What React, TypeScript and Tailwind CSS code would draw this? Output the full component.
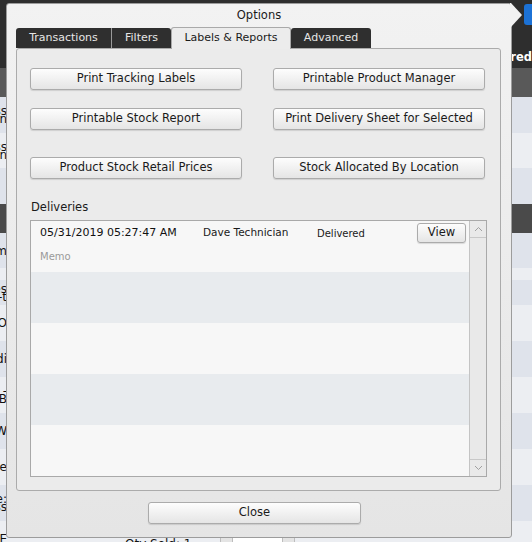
import React from "react";

function Frag({ lines }: { lines: string[] }) {
  return (
    <div className="w-[7px] overflow-hidden flex flex-col items-end justify-center text-[12px] leading-[8px] text-[#111] h-full">
      {lines.map((l, i) => (
        <span key={i} className="whitespace-nowrap">
          {l}
        </span>
      ))}
    </div>
  );
}

function Background() {
  return (
    <div className="flex flex-col">
      <div className="relative h-[68px] bg-[#2e2e2e] flex items-end justify-end pb-[5px]">
        <span className="text-white font-bold text-[11.5px] whitespace-nowrap leading-none">Delivered</span>
        <div className="absolute left-[524px] top-[4px] w-[14px] h-[21px] rounded-[3px] bg-[#1c72d6]" />
      </div>
      <div className="h-[29px] bg-[#595959]" />
      <div className="h-[36px] bg-[#dfe3eb]"><Frag lines={["Wireless", "Ran"]} /></div>
      <div className="h-[35px] bg-[#eceef2]"><Frag lines={["Wireless", "Ran"]} /></div>
      <div className="h-[36px] bg-[#dfe3eb]" />
      <div className="h-[29px] bg-[#4a4a4a]" />
      <div className="h-[35px] bg-[#dfe3eb]"><Frag lines={["Item"]} /></div>
      <div className="h-[12px] bg-[#eceef2]" />
      <div className="h-[25px] bg-[#dfe3eb]"><Frag lines={["Cables", "Set-t"]} /></div>
      <div className="h-[36px] bg-[#eceef2]"><Frag lines={["IPO"]} /></div>
      <div className="h-[36px] bg-[#dfe3eb]"><Frag lines={["Audi"]} /></div>
      <div className="h-[36px] bg-[#eceef2]"><Frag lines={["-", "AB"]} /></div>
      <div className="h-[36px] bg-[#dfe3eb]"><Frag lines={["W"]} /></div>
      <div className="h-[36px] bg-[#eceef2]"><Frag lines={["Case"]} /></div>
      <div className="h-[36px] bg-[#dfe3eb]"><Frag lines={["Size:", "Glass"]} /></div>
      <div className="h-[36px] bg-[#eceef2] flex">
        <Frag lines={["E"]} />
        <div className="ml-[118px] pt-[16px] flex items-start">
          <span className="w-[95px] text-[12px] leading-[14px] text-[#111] whitespace-nowrap">Qty Sold: 1</span>
          <div className="w-[13px] h-[20px] bg-[#e4e4e4] border border-[#bdbdbd]" />
          <div className="w-[49px] h-[20px] bg-white border-y border-[#bdbdbd]" />
          <div className="w-[13px] h-[20px] bg-[#e4e4e4] border border-[#bdbdbd]" />
        </div>
      </div>
    </div>
  );
}

function Btn({ label, className = "" }: { label: string; className?: string }) {
  return (
    <button
      className={
        "h-[22px] flex items-center justify-center rounded-[3px] border border-[#ababab] bg-gradient-to-b from-[#fdfdfd] to-[#e5e5e5] shadow-[0_1px_1px_rgba(0,0,0,0.12)] text-[11.5px] text-[#1a1a1a] whitespace-nowrap " +
        className
      }
    >
      {label}
    </button>
  );
}

function Chevron({ up }: { up?: boolean }) {
  return (
    <svg width="9" height="6" viewBox="0 0 9 6">
      <polyline
        points={up ? "1,5 4.5,1.5 8,5" : "1,1 4.5,4.5 8,1"}
        fill="none"
        stroke="#a0a0a0"
        strokeWidth="1"
      />
    </svg>
  );
}

function DeliveryList() {
  return (
    <div className="ml-[13px] mt-[6px] w-[457px] h-[257px] border border-[#a9a9a9] flex bg-[#f7f7f7]">
      <div className="w-[438px] flex flex-col">
        <div className="h-[51px] bg-[#f7f7f7] flex flex-col pt-[2px] pl-[9px]">
          <div className="h-[20px] flex items-center">
            <span className="w-[163px] text-[11px] text-[#111] whitespace-nowrap">05/31/2019 05:27:47 AM</span>
            <span className="w-[114px] text-[10.5px] text-[#1a1a1a] whitespace-nowrap">Dave Technician</span>
            <span className="w-[100px] text-[10px] text-[#1a1a1a] whitespace-nowrap">Delivered</span>
            <button className="w-[49px] h-[20px] flex items-center justify-center rounded-[3px] border border-[#ababab] bg-gradient-to-b from-[#fdfdfd] to-[#e5e5e5] shadow-[0_1px_1px_rgba(0,0,0,0.12)] text-[11.5px] text-[#1a1a1a]">
              View
            </button>
          </div>
          <div className="mt-[8px] text-[10px] leading-[12px] text-[#9a9a9a]">Memo</div>
        </div>
        <div className="h-[51px] bg-[#e8ebee]" />
        <div className="h-[51px] bg-[#f7f7f7]" />
        <div className="h-[51px] bg-[#e8ebee]" />
        <div className="h-[51px] bg-[#f7f7f7]" />
      </div>
      <div className="w-[17px] border-l border-[#c4c4c4] bg-[#e9e9e9] flex flex-col justify-between">
        <div className="h-[17px] border-b border-[#c8c8c8] flex items-center justify-center">
          <Chevron up />
        </div>
        <div className="h-[17px] border-t border-[#c8c8c8] flex items-center justify-center">
          <Chevron />
        </div>
      </div>
    </div>
  );
}

function Dialog() {
  return (
    <div className="absolute left-[6px] top-[3px] w-[506px] h-[535px] rounded-[3px] border border-[#9c9c9c] bg-gradient-to-b from-[#f2f2f2] to-[#e5e5e5] flex flex-col">
      <svg className="absolute left-[503px] top-[-1px]" width="13" height="25" viewBox="0 0 13 25">
        <polygon points="0,0 1,0 12,12 1,24 0,24" fill="#f2f2f2" />
      </svg>
      <div className="h-[23px] flex items-center justify-center text-[11.5px] text-[#1a1a1a]">Options</div>
      <div className="ml-[9px] h-[21px] flex items-end text-[11px] relative z-10">
        <div className="w-[96px] h-[20px] flex items-center justify-center bg-[#2f2f2f] text-[#e6e6e6] rounded-tl-[3px] border-r border-[#9a9a9a]">
          Transactions
        </div>
        <div className="w-[59px] h-[20px] flex items-center justify-center bg-[#2f2f2f] text-[#e6e6e6] rounded-tr-[3px]">
          Filters
        </div>
        <div className="w-[120px] h-[22px] mb-[-1px] flex items-center justify-center bg-[#ececec] text-[#1a1a1a] rounded-t-[3px] border-x border-t border-[#a9a9a9] pb-[1px]">
          Labels &amp; Reports
        </div>
        <div className="w-[80px] h-[20px] flex items-center justify-center bg-[#2f2f2f] text-[#e6e6e6] rounded-t-[3px]">
          Advanced
        </div>
      </div>
      <div className="ml-[9px] w-[485px] h-[443px] border border-[#ababab] rounded-[3px] bg-[#ebebeb] flex flex-col">
        <div className="ml-[13px] pt-[19px] grid grid-cols-[212px_212px] gap-x-[31px]">
          <Btn label="Print Tracking Labels" />
          <Btn label="Printable Product Manager" />
          <Btn label="Printable Stock Report" className="mt-[18px]" />
          <Btn label="Print Delivery Sheet for Selected" className="mt-[18px]" />
          <Btn label="Product Stock Retail Prices" className="mt-[27px]" />
          <Btn label="Stock Allocated By Location" className="mt-[27px]" />
        </div>
        <div className="ml-[14px] mt-[21px] text-[11.5px] leading-[14px] text-[#1a1a1a]">Deliveries</div>
        <DeliveryList />
      </div>
      <Btn label="Close" className="ml-[141px] mt-[11px] w-[213px]" />
    </div>
  );
}

export default function App() {
  return (
    <div className="relative w-[532px] h-[542px] overflow-hidden font-['DejaVu_Sans',Verdana,sans-serif] bg-[#eceef2]">
      <Background />
      <Dialog />
    </div>
  );
}
